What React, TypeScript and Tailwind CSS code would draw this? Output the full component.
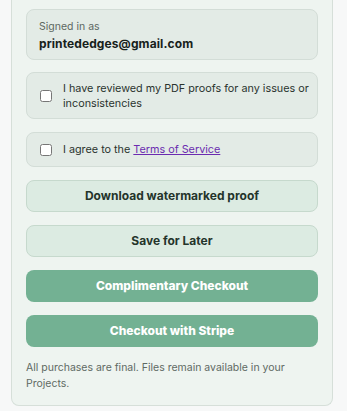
import { useState } from 'react'

export default function App() {
  const [reviewed, setReviewed] = useState(false)
  const [agreed, setAgreed] = useState(false)

  return (
    <div className="w-[347px] h-[411px] bg-[#f7f8f8] overflow-hidden" style={{ fontFamily: 'Inter, "Liberation Sans", sans-serif' }}>
      <div className="ml-[11px] w-[322px] h-[406px] bg-[#eef4f0] border border-t-0 border-[#d6dfd9] rounded-b-lg px-[14px] pt-[9px] flex flex-col">
        {/* Account */}
        <div className="h-[51px] rounded-lg bg-[#e3ebe6] border border-[#d3ddd7] pl-3 pt-[2px] flex flex-col justify-center">
          <span className="text-[10.5px] leading-[14px] text-[#5d6862]">Signed in as</span>
          <span className="mt-[2px] text-[12px] leading-[16px] font-bold tracking-[0.1px] text-[#17211b]">printededges@gmail.com</span>
        </div>

        {/* Confirmations */}
        <label className="mt-3 h-[47px] rounded-lg bg-[#e3ebe6] border border-[#d3ddd7] flex items-center pl-[13px] pr-2 cursor-pointer">
          <input
            type="checkbox"
            checked={reviewed}
            onChange={() => setReviewed(!reviewed)}
            className="w-[12px] h-[12px] shrink-0 accent-[#72b192]"
          />
          <span className="ml-[11px] text-[10.8px] leading-[15px] text-[#2a332e]">
            I have reviewed my PDF proofs for any issues or inconsistencies
          </span>
        </label>

        <label className="mt-[13px] h-[35px] rounded-lg bg-[#e3ebe6] border border-[#d3ddd7] flex items-center pl-[13px] pr-2 cursor-pointer">
          <input
            type="checkbox"
            checked={agreed}
            onChange={() => setAgreed(!agreed)}
            className="w-[12px] h-[12px] shrink-0 accent-[#72b192]"
          />
          <span className="ml-[11px] text-[10.8px] leading-[15px] text-[#2a332e]">
            I agree to the{' '}
            <a href="#" className="text-[#6b2bb0] underline">Terms of Service</a>
          </span>
        </label>

        {/* Actions */}
        <button className="mt-[13px] h-[32px] rounded-lg bg-[#dcebe2] border border-[#c6d9cd] text-[12px] font-bold text-[#24342b]">
          Download watermarked proof
        </button>
        <button className="mt-[13px] h-[32px] rounded-lg bg-[#dcebe2] border border-[#c6d9cd] text-[12px] font-bold text-[#24342b]">
          Save for Later
        </button>
        <button className="mt-[13px] h-[32px] rounded-lg bg-[#73b193] text-[12px] font-extrabold text-white">
          Complimentary Checkout
        </button>
        <button className="mt-[13px] h-[32px] rounded-lg bg-[#73b193] text-[12px] font-extrabold text-white">
          Checkout with Stripe
        </button>

        <p className="mt-[13px] text-[10.5px] leading-[16px] text-[#5f6a64]">
          All purchases are final. Files remain available in your Projects.
        </p>
      </div>
    </div>
  )
}
